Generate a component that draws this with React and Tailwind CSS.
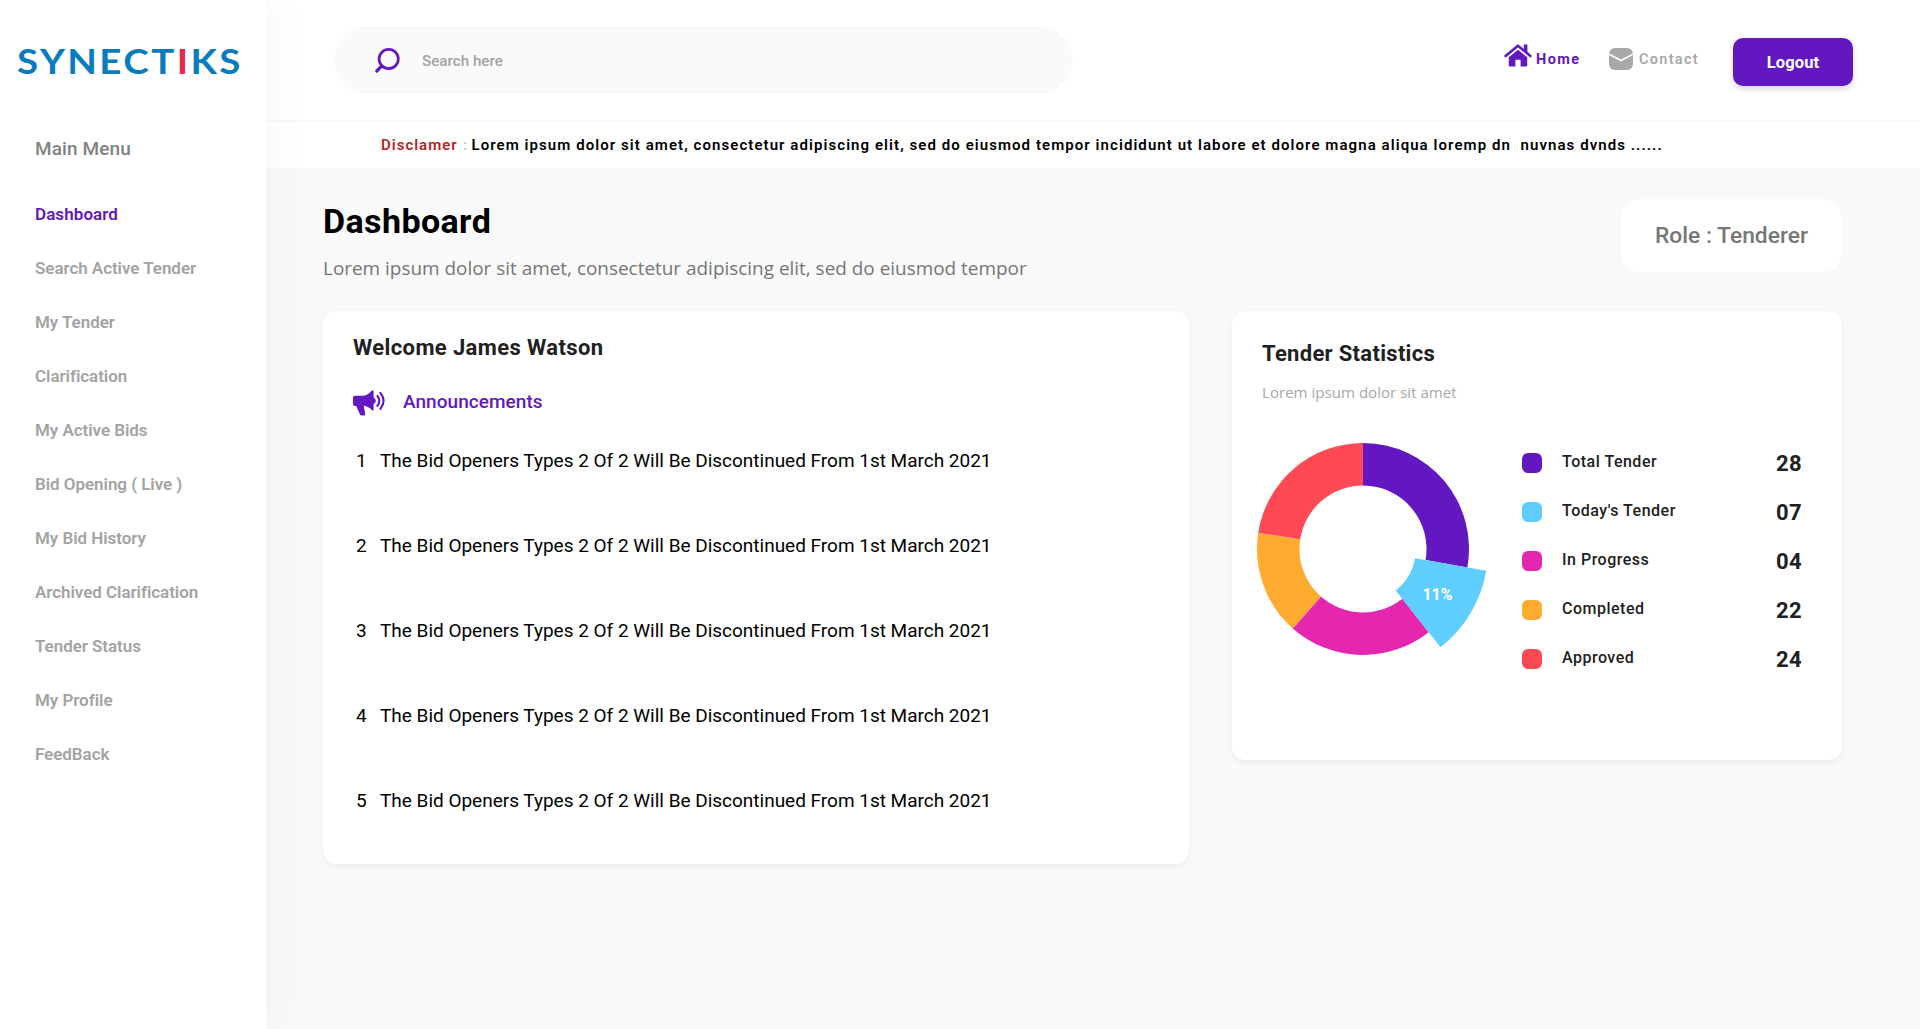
import React from "react";

const MENU = [
  "Dashboard",
  "Search Active Tender",
  "My Tender",
  "Clarification",
  "My Active Bids",
  "Bid Opening ( Live )",
  "My Bid History",
  "Archived Clarification",
  "Tender Status",
  "My Profile",
  "FeedBack",
];

const STATS = [
  { label: "Total Tender", value: "28", swatch: "bg-[#6217c1]" },
  { label: "Today's Tender", value: "07", swatch: "bg-[#5fceff]" },
  { label: "In Progress", value: "04", swatch: "bg-[#e427ae]" },
  { label: "Completed", value: "22", swatch: "bg-[#ffab2f]" },
  { label: "Approved", value: "24", swatch: "bg-[#ff4a55]" },
];

const SLICES = [
  { from: 0, to: 100, color: "#6217c1", inner: 63.5, outer: 106 },
  { from: 141.7, to: 221.5, color: "#e427ae", inner: 63.5, outer: 106 },
  { from: 221.5, to: 278.8, color: "#ffab2f", inner: 63.5, outer: 106 },
  { from: 278.8, to: 360, color: "#ff4a55", inner: 63.5, outer: 106 },
  { from: 100, to: 141.7, color: "#5fceff", inner: 52.8, outer: 125.2 },
];

function point(r, deg) {
  const a = (deg * Math.PI) / 180;
  return `${(r * Math.sin(a)).toFixed(2)} ${(-r * Math.cos(a)).toFixed(2)}`;
}

function slicePath({ from, to, inner, outer }) {
  return `M${point(outer, from)}A${outer} ${outer} 0 0 1 ${point(outer, to)}L${point(inner, to)}A${inner} ${inner} 0 0 0 ${point(inner, from)}Z`;
}

function SearchIcon() {
  return (
    <svg width="27" height="27" viewBox="0 0 27 27" fill="none" stroke="#6217c1" strokeLinecap="round" className="shrink-0">
      <circle cx="14.7" cy="12" r="9.6" strokeWidth="2.7" />
      <path d="M7.6 19.2L2.8 24" strokeWidth="3.2" />
    </svg>
  );
}

function HomeIcon() {
  return (
    <svg width="28" height="23" viewBox="0 0 28 23" className="shrink-0">
      <path d="M1.6 12L14 1.7L26.4 12" fill="none" stroke="#6217c1" strokeWidth="2.6" strokeLinecap="round" strokeLinejoin="round" />
      <path d="M19.8 0.6H23.4V9L19.8 6Z" fill="#6217c1" />
      <path d="M14 5.7L23.2 13.3V21.6Q23.2 22.4 22.4 22.4H16.6V15.8H11.4V22.4H5.6Q4.8 22.4 4.8 21.6V13.3Z" fill="#6217c1" />
    </svg>
  );
}

function MailIcon() {
  return (
    <svg width="24" height="22" viewBox="0 0 24 22" className="shrink-0">
      <rect width="24" height="22" rx="6" fill="#a8a8a8" />
      <path d="M-1 5.6L12 12.6L25 5.6" fill="none" stroke="#fff" strokeWidth="1.7" />
    </svg>
  );
}

function MegaphoneIcon() {
  return (
    <svg width="32" height="26" viewBox="0 0 32 26" className="shrink-0">
      <path
        d="M2 5.8H10.5C14.5 5.2 17 2.6 18.8 0.8Q20.6 -0.4 20.6 1.6V7.6Q22.8 8.6 22.8 10.8T20.6 14V19.4Q20.6 21.4 18.8 20C17 18.2 14.6 16.4 11.2 15.8H10.8L12.2 24Q12.3 25.4 11.2 25.4H8.6Q7.4 25.4 7 24.4L3.2 16H1.8Q0 15.8 0 14V7.8Q0 5.8 2 5.8Z"
        fill="#6217c1"
      />
      <path d="M24.4 6Q28.2 10.8 24.4 15.8M27.4 2.8Q33.8 10.8 27.4 18.8" fill="none" stroke="#6217c1" strokeWidth="2.1" strokeLinecap="round" />
    </svg>
  );
}

function Donut() {
  return (
    <svg width="236" height="216" viewBox="-108 -108 236 216" className="shrink-0">
      {SLICES.map((s) => (
        <path key={s.color} d={slicePath(s)} fill={s.color} />
      ))}
      <text x="74.5" y="51" textAnchor="middle" fill="#fff" className="text-[16.5px] font-bold" textLength="30" lengthAdjust="spacingAndGlyphs">
        11%
      </text>
    </svg>
  );
}

function Sidebar() {
  return (
    <aside className="relative z-10 h-full w-[266px] shrink-0 bg-white shadow-[0_0_48px_8px_rgba(0,0,0,0.032)]">
      <div className="flex h-[122px] items-center pb-px pl-[17px]">
        <span className="inline-block origin-left scale-x-110 font-[Lato,sans-serif] text-[35px] leading-none font-bold tracking-[2.2px] text-[#0a7bbf]">
          SYNECT<span className="text-[#e5294f]">I</span>KS
        </span>
      </div>
      <div className="flex h-[55px] items-center pl-[35px] text-[19px] font-medium tracking-[0.1px] text-[#828282]">Main Menu</div>
      <nav className="mt-[11px] flex flex-col">
        {MENU.map((m, i) => (
          <a key={m} className={`flex h-[54px] items-center pl-[35px] text-[17px] font-semibold whitespace-nowrap ${i === 0 ? "tracking-[0.08px] text-[#6217c1]" : "tracking-[-0.05px] text-[#a3a3a3]"}`}>
            {m}
          </a>
        ))}
      </nav>
    </aside>
  );
}

function Header() {
  return (
    <header className="flex h-[120px] items-center bg-white">
      <div className="ml-[68px] flex h-[68px] w-[739px] items-center rounded-full bg-[#fafafa] pl-[40px]">
        <SearchIcon />
        <span className="mt-0.5 ml-[21px] text-[15.2px] font-medium text-[#a3a3a3]">Search here</span>
      </div>
      <div className="ml-[431px] flex w-[105px] items-center">
        <div className="-mt-[9px]">
          <HomeIcon />
        </div>
        <span className="ml-[4px] text-[14.5px] font-bold tracking-[1.4px] text-[#6217c1]">Home</span>
      </div>
      <div className="flex w-[124px] items-center">
        <div className="-mt-0.5">
          <MailIcon />
        </div>
        <span className="ml-[6px] text-[14.5px] font-semibold tracking-[1.3px] text-[#a8a8a8]">Contact</span>
      </div>
      <button className="mt-1 flex h-12 w-[120px] items-center justify-center rounded-[10px] bg-[#6217c1] pt-0.5 text-[16.5px] font-bold tracking-[0.15px] text-white shadow-[0_3px_6px_rgba(0,0,0,0.16)]">
        Logout
      </button>
    </header>
  );
}

function Disclaimer() {
  return (
    <div className="flex h-[48px] items-center border-t-2 border-[#f9f9f9] bg-white pl-[115px] text-[15px] font-semibold tracking-[1.07px] whitespace-pre text-black">
      <span className="w-[82px] tracking-[1px] text-[#b72525]">Disclamer</span>
      <span className="w-[8.5px] text-[#c8c8c8]">:</span>
      <span>
        {"Lorem ipsum dolor sit amet, consectetur adipiscing elit, sed do eiusmod tempor incididunt ut labore et dolore magna aliqua loremp dn  nuvnas dvnds ......"}
      </span>
    </div>
  );
}

function Announcements() {
  return (
    <section className="h-[553px] w-[866px] rounded-[14px] bg-white pt-[26px] pl-[30px] shadow-[0_3px_6px_rgba(0,0,0,0.05)]">
      <h2 className="text-[22px] leading-[22px] font-bold tracking-[0.38px] text-[#212121]">Welcome James Watson</h2>
      <div className="mt-[31px] flex h-[26px] items-center">
        <MegaphoneIcon />
        <span className="-mt-0.5 ml-[18px] text-[19px] font-medium tracking-[0.05px] text-[#6217c1]">Announcements</span>
      </div>
      <ol className="mt-[3px] flex flex-col">
        {[1, 2, 3, 4, 5].map((n) => (
          <li key={n} className="flex h-[85px] items-center text-[19px] tracking-[-0.01px] text-black">
            <span className="w-[27px] pl-[3px]">{n}</span>
            <span>The Bid Openers Types 2 Of 2 Will Be Discontinued From 1st March 2021</span>
          </li>
        ))}
      </ol>
    </section>
  );
}

function Statistics() {
  return (
    <section className="h-[449px] w-[610px] rounded-[14px] bg-white pt-[32px] shadow-[0_3px_6px_rgba(0,0,0,0.05)]">
      <h2 className="pl-[30px] text-[22px] leading-[22px] font-bold tracking-[0.3px] text-[#212121]">Tender Statistics</h2>
      <p className="mt-[17px] pl-[30px] font-['Open_Sans',sans-serif] text-[15.1px] leading-[20px] text-[#a8a8a8]">Lorem ipsum dolor sit amet</p>
      <div className="mt-[39px] flex items-start pl-[22.5px]">
        <Donut />
        <ul className="mt-[-3px] ml-[31.5px] flex w-[280px] flex-col">
          {STATS.map((s) => (
            <li key={s.label} className="flex h-[49px] items-center">
              <span className={`size-5 rounded-[6px] ${s.swatch}`} />
              <span className="-mt-0.5 ml-[20px] flex-1 text-[16px] font-medium tracking-[0.5px] text-[#212121]">{s.label}</span>
              <span className="mt-0.5 text-[22px] font-bold tracking-[0.4px] text-[#212121]">{s.value}</span>
            </li>
          ))}
        </ul>
      </div>
    </section>
  );
}

export default function App() {
  return (
    <div className="flex h-[1029px] w-[1920px] overflow-hidden bg-[#f9f9f9] font-[Roboto,sans-serif]">
      <Sidebar />
      <main className="flex flex-1 flex-col">
        <Header />
        <Disclaimer />
        <div className="mr-[78px] ml-[57px] flex h-[143px] items-start justify-between">
          <div className="pt-[33px]">
            <h1 className="text-[34px] leading-[40px] font-bold tracking-[0.4px] text-black">Dashboard</h1>
            <p className="mt-[13px] font-['Open_Sans',sans-serif] text-[18.93px] leading-[28px] text-[#767676]">
              Lorem ipsum dolor sit amet, consectetur adipiscing elit, sed do eiusmod tempor
            </p>
          </div>
          <div className="mt-[31px] flex h-[73px] w-[221px] items-center justify-center rounded-[20px] bg-white pt-0.5 text-[22.8px] font-medium text-[#777]">
            Role : Tenderer
          </div>
        </div>
        <div className="ml-[57px] flex items-start gap-[43px]">
          <Announcements />
          <Statistics />
        </div>
      </main>
    </div>
  );
}
